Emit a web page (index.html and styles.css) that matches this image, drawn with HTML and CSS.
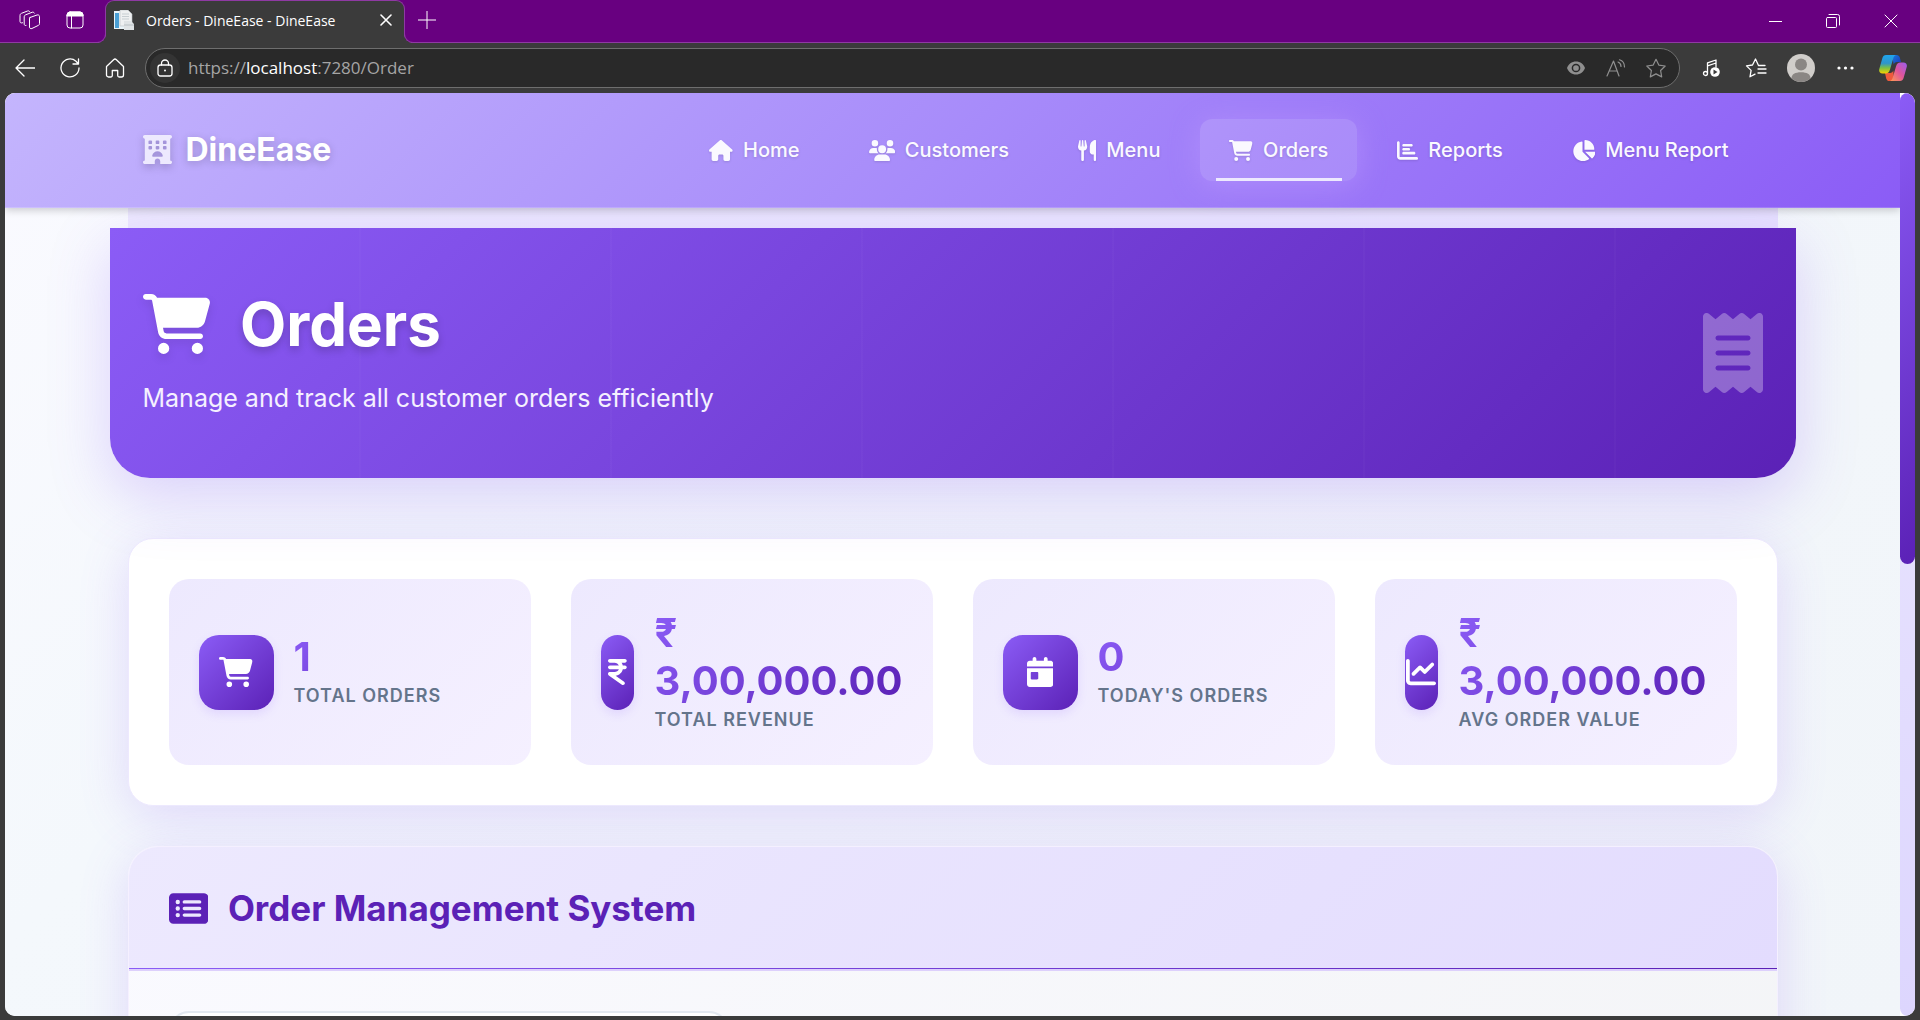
FILE: index.html
```html
<!DOCTYPE html>
<html lang="en">
<head>
<meta charset="utf-8">
<meta name="viewport" content="width=device-width, initial-scale=1">
<title>Orders - DineEase - DineEase</title>
<link rel="stylesheet" href="styles.css">
</head>
<body>
<svg class="sprite" aria-hidden="true">
  <symbol id="cart" viewBox="0 0 576 512"><path d="M0 24C0 10.700 10.700 0 24 0H69.500c22 0 41.500 12.800 50.600 32h411c26.300 0 45.500 25 38.600 50.400l-41 152.300c-8.500 31.400-37 53.300-69.500 53.300H170.700l5.400 28.500c2.200 11.300 12.100 19.500 23.600 19.500H488c13.300 0 24 10.700 24 24s-10.700 24-24 24H199.700c-34.600 0-64.300-24.600-70.700-58.500L77.400 54.500c-.7-3.800-4-6.500-7.900-6.500H24C10.700 48 0 37.300 0 24zM128 464a48 48 0 1 1 96 0 48 48 0 1 1 -96 0zm336-48a48 48 0 1 1 0 96 48 48 0 1 1 0-96z"/></symbol>
</svg>

<header class="titlebar">
  <div class="titlebar-tools">
    <button type="button" class="chrome-btn" aria-label="Workspaces">
      <svg width="22" height="20" viewBox="0 0 22 20" class="line"><path d="M11 7.500l7-2.500c1.200-.4 2.500.2 2.500 1.500v7c0 1-.4 1.600-1.400 2l-6.200 3c-1.300.6-2.400-.2-2.400-1.500V9c0-.8.2-1.300.5-1.500zM7 15.500c-1 .3-1.800-.3-1.800-1.500V7c0-1.200.5-1.800 1.500-2.200L13 2.300c1-.4 2 0 2.400.8M3.500 12.800C2.200 13.300 1 12.800 1 11.500V5.500c0-1.200.5-1.800 1.500-2.200L8.500 1c1-.4 1.800 0 2.200.6"/></svg>
    </button>
    <button type="button" class="chrome-btn" aria-label="Tab actions">
      <svg width="18" height="18" viewBox="0 0 18 18" class="line"><rect x="1" y="1" width="16" height="16" rx="3"/><path d="M1 4a3 3 0 0 1 3-3h10a3 3 0 0 1 3 3v1H1z" fill="#fff"/><path d="M5.500 5v12"/></svg>
    </button>
  </div>
  <div class="tab">
    <svg width="20" height="20" viewBox="0 0 20 20"><path d="M0 1h10v18H0z" fill="#e9f3f8"/><path d="M1 3h4v15H1z" fill="#4a9fd4"/><path d="M6 0h8l4 4v12H6z" fill="#eef0f1" stroke="#b9c0c4" stroke-width=".6"/><path d="M8 4h7M8 6.500h7M8 9h7" stroke="#c7ced2"/><path d="M10 11h7l3 3v6H10z" fill="#dfe3e5"/><path d="M10 15h10" stroke="#b9c0c4"/></svg>
    <span class="tab-title">Orders - DineEase - DineEase</span>
    <button type="button" class="tab-close" aria-label="Close tab"><svg width="12" height="12" viewBox="0 0 12 12" class="line bold"><path d="M1 1l10 10M11 1L1 11"/></svg></button>
  </div>
  <button type="button" class="chrome-btn" aria-label="New tab"><svg width="18" height="18" viewBox="0 0 18 18" class="line"><path d="M9 0v18M0 9h18"/></svg></button>
  <div class="window-controls">
    <button type="button" aria-label="Minimize"><svg width="13" height="13" viewBox="0 0 13 13" class="line"><path d="M0 6.500h13"/></svg></button>
    <button type="button" aria-label="Restore"><svg width="14" height="14" viewBox="0 0 14 14" class="line"><rect x=".5" y="3.500" width="10" height="10" rx="1"/><path d="M3 .5h8.500a2 2 0 0 1 2 2V11"/></svg></button>
    <button type="button" aria-label="Close"><svg width="14" height="14" viewBox="0 0 14 14" class="line"><path d="M1 1l12 12M13 1L1 13"/></svg></button>
  </div>
</header>

<div class="toolbar">
  <button type="button" class="tool" aria-label="Back"><svg width="20" height="18" viewBox="0 0 20 18" class="line mid"><path d="M20 9H1M9 1L1 9l8 8"/></svg></button>
  <button type="button" class="tool" aria-label="Refresh"><svg width="20" height="20" viewBox="0 0 20 20" class="line mid"><path d="M19 10a9 9 0 1 1-3-6.800L18.500 6M18.500 1v5H13"/></svg></button>
  <button type="button" class="tool" aria-label="Home"><svg width="20" height="20" viewBox="0 0 20 20" class="line mid"><path d="M1.500 8.500L8.600 1.700a2 2 0 0 1 2.800 0l7.100 6.800V17a2 2 0 0 1-2 2h-2.300a1.500 1.500 0 0 1-1.500-1.500V12.500h-5.400v5A1.500 1.500 0 0 1 5.800 19H3.500a2 2 0 0 1-2-2z"/></svg></button>
  <div class="address">
    <button type="button" class="lock" aria-label="Site information"><svg width="16" height="18" viewBox="0 0 16 18" class="line mid"><rect x="1" y="6" width="14" height="11" rx="2.500"/><path d="M4.500 6V4.500a3.500 3.500 0 0 1 7 0V6"/><circle cx="8" cy="11.500" r="1" fill="#fff" stroke="none"/></svg></button>
    <div class="url" role="textbox" aria-label="Address" contenteditable="true" spellcheck="false">https://<b>localhost</b>:7280/Order</div>
    <button type="button" class="addr-btn" aria-label="Tracking"><svg width="18" height="14" viewBox="0 0 18 14"><path d="M9 .5C4.800.5 1.200 3.200 0 7c1.200 3.800 4.800 6.500 9 6.500S16.800 10.800 18 7C16.800 3.200 13.200.5 9 .5z" fill="#8f8f8f"/><circle cx="9" cy="7" r="3.600" fill="none" stroke="#292929" stroke-width="1.500"/></svg></button>
    <button type="button" class="addr-btn" aria-label="Read aloud"><svg width="20" height="18" viewBox="0 0 20 18" class="line dim"><path d="M1 17L7.500 2 13 17M3.200 12h8M12 3c2 .8 3 2.400 3 4.500M13.500 .8c3.200 1 5 3.600 5 7.200"/></svg></button>
    <button type="button" class="addr-btn" aria-label="Add to favorites"><svg width="22" height="20" viewBox="0 0 22 20" class="line dim"><path d="M11 1.300l2.800 5.800 6.400.9-4.600 4.500 1.100 6.400L11 15.900l-5.700 3 1.100-6.400L1.800 8l6.400-.9z"/></svg></button>
  </div>
  <button type="button" class="tool" aria-label="Media"><svg width="18" height="18" viewBox="0 0 18 18" class="line mid"><path d="M5.500 14V3.800L14 1v7M5.500 6.800L14 4"/><circle cx="3.500" cy="14.500" r="2"/><circle cx="13" cy="13" r="4.800" fill="#fff" stroke="none"/><path d="M11.500 10.500v5l4-2.500z" fill="#3b3b3b" stroke="none"/></svg></button>
  <button type="button" class="tool" aria-label="Favorites"><svg width="22" height="20" viewBox="0 0 22 20" class="line mid"><path d="M20 7.500h-6.500L10.500 1 7.500 7l-6 .9 4.600 4.500L5 18.800l5-2.700M13 11h8M13 15h8"/></svg></button>
  <button type="button" class="tool" aria-label="Profile"><svg width="28" height="28" viewBox="0 0 28 28"><circle cx="14" cy="14" r="14" fill="#d0cdca"/><circle cx="14" cy="10.500" r="6" fill="#8a8684"/><path d="M4.500 24.200c0-4 3.500-6 9.500-6s9.500 2 9.500 6A14 14 0 0 1 14 28a14 14 0 0 1-9.500-3.800z" fill="#8a8684"/></svg></button>
  <button type="button" class="tool" aria-label="Settings"><svg width="17" height="4" viewBox="0 0 17 4" fill="#fff"><circle cx="2" cy="2" r="1.600"/><circle cx="8.500" cy="2" r="1.600"/><circle cx="15" cy="2" r="1.600"/></svg></button>
  <button type="button" class="tool copilot" aria-label="Copilot"><svg width="28" height="26" viewBox="0 0 28 26">
    <defs>
      <linearGradient id="cl" x1="0" y1="0" x2="0" y2="1"><stop offset="0" stop-color="#1fa5ee"/><stop offset=".45" stop-color="#2f95c9"/><stop offset=".7" stop-color="#7bc142"/><stop offset="1" stop-color="#f5d000"/></linearGradient>
      <linearGradient id="cr" x1="1" y1="0" x2="0" y2="1"><stop offset="0" stop-color="#9a5cf0"/><stop offset=".5" stop-color="#e0559a"/><stop offset="1" stop-color="#ff9c50"/></linearGradient>
      <linearGradient id="cb" x1="0" y1="0" x2="1" y2="1"><stop offset="0" stop-color="#1a7bdc"/><stop offset="1" stop-color="#1b36b8"/></linearGradient>
    </defs>
    <path d="M13 0h4.500c1.800 0 2.800 1 3.300 2.600L22 7h-4c-1.800 0-2.800 1-3.300 2.500z" fill="url(#cb)"/>
    <path d="M15 26h-4.500c-1.800 0-2.800-1-3.300-2.600L6 18h5c1.800 0 2.800-1 3.300-2.500z" fill="#ee5a3c"/>
    <path d="M7 0h10c-1.500.4-2.200 1.600-2.700 3.200L11 14.500C10.200 17.200 9 18.500 6.500 18.500H3.500C.8 18.500-.4 16.500.3 14L3.400 3C4 1 5.200 0 7 0z" fill="url(#cl)"/>
    <path d="M21 26H11c1.500-.4 2.200-1.600 2.700-3.200L17 11.500C17.800 8.800 19 7.500 21.500 7.500h3c2.700 0 3.900 2 3.200 4.500L24.600 23c-.6 2-1.800 3-3.600 3z" fill="url(#cr)"/>
  </svg></button>
</div>

<div class="viewport">
  <div class="page">
    <nav class="navbar">
      <div class="navbar-inner">
        <a class="brand" href="#"><svg class="brand-icon" viewBox="0 0 512 512"><path d="M0 32C0 14.300 14.300 0 32 0H480c17.700 0 32 14.300 32 32s-14.300 32-32 32V448c17.700 0 32 14.300 32 32s-14.300 32-32 32H304V464c0-26.500-21.500-48-48-48s-48 21.500-48 48v48H32c-17.700 0-32-14.300-32-32s14.300-32 32-32V64C14.300 64 0 49.700 0 32zm96 80v32c0 8.800 7.200 16 16 16h32c8.800 0 16-7.200 16-16V112c0-8.800-7.200-16-16-16H112c-8.800 0-16 7.200-16 16zM240 96c-8.800 0-16 7.200-16 16v32c0 8.800 7.200 16 16 16h32c8.800 0 16-7.200 16-16V112c0-8.800-7.200-16-16-16H240zm112 16v32c0 8.800 7.200 16 16 16h32c8.800 0 16-7.200 16-16V112c0-8.800-7.200-16-16-16H368c-8.800 0-16 7.200-16 16zM112 192c-8.800 0-16 7.200-16 16v32c0 8.800 7.200 16 16 16h32c8.800 0 16-7.200 16-16V208c0-8.800-7.200-16-16-16H112zm112 16v32c0 8.800 7.200 16 16 16h32c8.800 0 16-7.200 16-16V208c0-8.800-7.200-16-16-16H240c-8.800 0-16 7.200-16 16zm144-16c-8.800 0-16 7.200-16 16v32c0 8.800 7.200 16 16 16h32c8.800 0 16-7.200 16-16V208c0-8.800-7.200-16-16-16H368zM328 384c13.300 0 24.300-10.900 21-23.800c-10.600-41.500-48.200-72.200-93-72.200s-82.500 30.700-93 72.200c-3.300 12.800 7.800 23.800 21 23.800H328z"/></svg>DineEase</a>
        <ul class="nav-list">
          <li><a class="nav-link" href="#"><svg viewBox="0 0 576 512"><path d="M575.800 255.500c0 18-15 32.100-32 32.100h-32l.7 160.200c0 2.700-.2 5.400-.5 8.100V472c0 22.100-17.900 40-40 40H456c-1.100 0-2.200 0-3.300-.1c-1.400 .1-2.800 .1-4.200 .1H416 392c-22.100 0-40-17.900-40-40V448 384c0-17.700-14.300-32-32-32H256c-17.700 0-32 14.300-32 32v64 24c0 22.100-17.900 40-40 40H160 128.100c-1.500 0-3-.1-4.500-.2c-1.200 .1-2.400 .2-3.600 .2H104c-22.100 0-40-17.900-40-40V360c0-.9 0-1.900 .1-2.800V287.600H32c-18 0-32-14-32-32.100c0-9 3-17 10-24L266.400 8c7-7 15-8 22-8s15 2 21 7L564.800 231.500c8 7 12 15 11 24z"/></svg>Home</a></li>
          <li><a class="nav-link" href="#"><svg viewBox="0 0 640 512"><path d="M144 0a80 80 0 1 1 0 160A80 80 0 1 1 144 0zM512 0a80 80 0 1 1 0 160A80 80 0 1 1 512 0zM0 298.700C0 239.800 47.800 192 106.700 192h42.700c15.900 0 31 3.500 44.600 9.700c-1.300 7.200-1.900 14.700-1.900 22.300c0 38.200 16.800 72.500 43.300 96H21.300C9.600 320 0 310.400 0 298.700zM405.300 320c26.600-23.500 43.300-57.800 43.300-96c0-7.600-.7-15-1.900-22.300c13.600-6.300 28.700-9.700 44.600-9.700h42.700C592.200 192 640 239.800 640 298.700c0 11.800-9.600 21.300-21.300 21.300H405.300zM224 224a96 96 0 1 1 192 0 96 96 0 1 1 -192 0zM128 485.300C128 411.700 187.700 352 261.300 352H378.700C452.300 352 512 411.700 512 485.300c0 14.700-11.900 26.700-26.700 26.700H154.700c-14.700 0-26.700-11.900-26.700-26.700z"/></svg>Customers</a></li>
          <li><a class="nav-link" href="#"><svg viewBox="0 0 448 512"><path d="M416 0C400 0 288 32 288 176V288c0 35.300 28.700 64 64 64h32V480c0 17.700 14.300 32 32 32s32-14.300 32-32V352 240 32c0-17.700-14.300-32-32-32zM64 16C64 7.800 57.900 1 49.700 .1S34.200 4.600 32.400 12.500L2.100 148.800C.7 155.100 0 161.500 0 167.900c0 45.900 35.100 83.600 80 87.700V480c0 17.700 14.300 32 32 32s32-14.300 32-32V255.600c44.900-4.100 80-41.800 80-87.700c0-6.400-.7-12.800-2.100-19.100L191.600 12.500c-1.800-8-9.300-13.300-17.400-12.400S160 7.800 160 16V150.200c0 5.400-4.400 9.800-9.800 9.800c-5.100 0-9.300-3.900-9.800-9L127.900 14.600C127.200 6.300 120.300 0 112 0s-15.200 6.300-15.900 14.600L83.700 151c-.5 5.100-4.700 9-9.800 9c-5.400 0-9.800-4.400-9.800-9.800V16z"/></svg>Menu</a></li>
          <li><a class="nav-link active" href="#" aria-current="page"><svg viewBox="0 0 576 512"><use href="#cart"/></svg>Orders</a></li>
          <li><a class="nav-link" href="#"><svg viewBox="0 0 512 512"><path d="M32 32c17.700 0 32 14.300 32 32V400c0 8.800 7.200 16 16 16H480c17.700 0 32 14.300 32 32s-14.300 32-32 32H80c-44.200 0-80-35.800-80-80V64C0 46.300 14.300 32 32 32zm96 96c0-17.700 14.300-32 32-32l192 0c17.700 0 32 14.300 32 32s-14.300 32-32 32H160c-17.700 0-32-14.300-32-32zm32 64H288c17.700 0 32 14.300 32 32s-14.300 32-32 32H160c-17.700 0-32-14.300-32-32s14.300-32 32-32zm0 96H416c17.700 0 32 14.300 32 32s-14.300 32-32 32H160c-17.700 0-32-14.300-32-32s14.300-32 32-32z"/></svg>Reports</a></li>
          <li><a class="nav-link" href="#"><svg viewBox="0 0 576 512"><path d="M304 240V16.600c0-9 7-16.600 16-16.600C443.700 0 544 100.300 544 224c0 9-7.600 16-16.600 16H304zM32 272C32 150.700 122.100 50.300 239 34.300c9.200-1.300 17 6.100 17 15.400V288L412.500 444.500c6.700 6.700 6.200 17.700-1.500 23.100C371.800 495.600 323.800 512 272 512C139.500 512 32 404.600 32 272zm526.400 16c9.300 0 16.600 7.800 15.400 17c-7.700 55.900-34.600 105.600-73.900 142.300c-6 5.600-15.400 5.200-21.200-.7L320 288H558.400z"/></svg>Menu Report</a></li>
        </ul>
      </div>
    </nav>

    <main class="container">
      <section class="hero">
        <div>
          <h1><svg viewBox="0 0 576 512"><use href="#cart"/></svg>Orders</h1>
          <p>Manage and track all customer orders efficiently</p>
        </div>
        <svg class="hero-icon" viewBox="0 0 384 512"><path d="M14 2.200C22.500-1.700 32.500-.3 39.600 5.800L80 40.400 120.400 5.800c9-7.700 22.300-7.700 31.200 0L192 40.400 232.400 5.800c9-7.700 22.300-7.700 31.200 0L304 40.400 344.400 5.800c7.100-6.100 17.100-7.500 25.600-3.600s14 12.400 14 21.800V488c0 9.400-5.500 17.900-14 21.800s-18.500 2.500-25.600-3.600L304 471.600l-40.400 34.600c-9 7.700-22.300 7.700-31.200 0L192 471.600l-40.400 34.600c-9 7.700-22.300 7.700-31.200 0L80 471.600 39.600 506.200c-7.100 6.100-17.100 7.500-25.600 3.600S0 497.400 0 488V24C0 14.600 5.500 6.100 14 2.200zM96 144c-8.800 0-16 7.200-16 16s7.200 16 16 16H288c8.800 0 16-7.200 16-16s-7.200-16-16-16H96zM80 352c0 8.800 7.200 16 16 16H288c8.800 0 16-7.200 16-16s-7.200-16-16-16H96c-8.800 0-16 7.200-16 16zM96 240c-8.800 0-16 7.200-16 16s7.200 16 16 16H288c8.800 0 16-7.200 16-16s-7.200-16-16-16H96z"/></svg>
      </section>

      <section class="stats" aria-label="Order statistics">
        <article class="stat">
          <div class="stat-icon"><svg viewBox="0 0 576 512"><use href="#cart"/></svg></div>
          <div><div class="stat-value">1</div><div class="stat-label">TOTAL ORDERS</div></div>
        </article>
        <article class="stat">
          <div class="stat-icon"><svg viewBox="0 0 320 512"><path d="M0 64C0 46.300 14.300 32 32 32H96h16H288c17.700 0 32 14.300 32 32s-14.300 32-32 32H231.800c9.600 14.400 16.700 30.600 20.700 48H288c17.700 0 32 14.300 32 32s-14.300 32-32 32H252.400c-13.200 58.300-61.900 103.200-122.200 110.900L274.600 422c14.400 10.300 17.700 30.300 7.400 44.600s-30.300 17.700-44.600 7.400L13.400 314C2.100 306-2.700 291.500 1.500 278.200S18.100 256 32 256h80c32.800 0 61-19.700 73.300-48H32c-17.700 0-32-14.300-32-32s14.300-32 32-32H185.300C173 115.700 144.800 96 112 96H96 32C14.300 96 0 81.700 0 64z"/></svg></div>
          <div><div class="stat-value">₹ 3,00,000.00</div><div class="stat-label">TOTAL REVENUE</div></div>
        </article>
        <article class="stat">
          <div class="stat-icon"><svg viewBox="0 0 448 512"><path d="M128 0c17.700 0 32 14.300 32 32V64H288V32c0-17.700 14.300-32 32-32s32 14.300 32 32V64h48c26.500 0 48 21.500 48 48v48H0V112C0 85.500 21.500 64 48 64H96V32c0-17.700 14.300-32 32-32zM0 192H448V464c0 26.500-21.500 48-48 48H48c-26.500 0-48-21.500-48-48V192zm80 64c-8.800 0-16 7.200-16 16v96c0 8.800 7.200 16 16 16h96c8.800 0 16-7.200 16-16V272c0-8.800-7.200-16-16-16H80z"/></svg></div>
          <div><div class="stat-value">0</div><div class="stat-label">TODAY'S ORDERS</div></div>
        </article>
        <article class="stat">
          <div class="stat-icon"><svg viewBox="0 0 512 512"><path d="M64 64c0-17.700-14.300-32-32-32S0 46.300 0 64V400c0 44.200 35.800 80 80 80H480c17.700 0 32-14.300 32-32s-14.300-32-32-32H80c-8.800 0-16-7.200-16-16V64zm406.600 86.600c12.500-12.500 12.500-32.800 0-45.300s-32.800-12.500-45.300 0L320 210.700l-57.400-57.400c-12.500-12.500-32.800-12.500-45.300 0l-112 112c-12.500 12.500-12.500 32.800 0 45.300s32.800 12.500 45.300 0L240 221.300l57.400 57.400c12.500 12.500 32.800 12.500 45.300 0l128-128z"/></svg></div>
          <div><div class="stat-value">₹ 3,00,000.00</div><div class="stat-label">AVG ORDER VALUE</div></div>
        </article>
      </section>

      <section class="panel">
        <header class="panel-header">
          <h2><svg viewBox="0 0 576 512"><path d="M0 96C0 60.700 28.700 32 64 32H512c35.300 0 64 28.700 64 64V416c0 35.300-28.700 64-64 64H64c-35.300 0-64-28.700-64-64V96zM128 288a32 32 0 1 0 0-64 32 32 0 1 0 0 64zm32-128a32 32 0 1 0 -64 0 32 32 0 1 0 64 0zM128 384a32 32 0 1 0 0-64 32 32 0 1 0 0 64zm96-248c-13.300 0-24 10.700-24 24s10.700 24 24 24H448c13.300 0 24-10.700 24-24s-10.700-24-24-24H224zm0 96c-13.300 0-24 10.700-24 24s10.700 24 24 24H448c13.300 0 24-10.700 24-24s-10.700-24-24-24H224zm0 96c-13.300 0-24 10.700-24 24s10.700 24 24 24H448c13.300 0 24-10.700 24-24s-10.700-24-24-24H224z"/></svg>Order Management System</h2>
        </header>
        <div class="panel-body">
          <input class="search" type="search" aria-label="Search orders">
        </div>
      </section>
    </main>
  </div>
  <div class="scrollbar"><div class="thumb"></div></div>
</div>
</body>
</html>
```
FILE: styles.css
```css
*, *::before, *::after { box-sizing: border-box; }

body {
  margin: 0;
  height: 100vh;
  display: flex;
  flex-direction: column;
  overflow: hidden;
  background: #3b3b3b;
  font-family: Inter, "Liberation Sans", sans-serif;
}

h1, h2, p, ul { margin: 0; padding: 0; }
ul { list-style: none; }
a { color: inherit; text-decoration: none; }
button {
  display: flex;
  align-items: center;
  justify-content: center;
  padding: 0;
  border: 0;
  background: none;
}
.sprite { display: none; }

/* Browser window */
.line { fill: none; stroke: #fff; stroke-width: 1; stroke-linecap: round; stroke-linejoin: round; }
.line.mid { stroke-width: 1.3; }
.line.bold { stroke-width: 1.6; }
.line.dim { stroke: #8f8f8f; stroke-width: 1.2; }

.titlebar {
  flex: none;
  display: flex;
  height: 43px;
  padding-left: 8px;
  background: #680080;
  border-bottom: 1px solid #8f3aa3;
  font-family: "Open Sans", "Noto Sans", sans-serif;
}
.titlebar-tools { display: flex; gap: 1px; margin-right: 8px; }
.chrome-btn { width: 44px; height: 40px; }
.tab {
  position: relative;
  display: flex;
  align-items: center;
  width: 300px;
  height: 43px;
  padding: 0 6px 4px 8px;
  background: #3b3b3b;
  border: 1px solid #8f3aa3;
  border-bottom: 0;
  border-radius: 9px 9px 0 0;
}
.tab::before, .tab::after {
  content: "";
  position: absolute;
  bottom: 0;
  width: 10px;
  height: 10px;
  border: 1px solid #8f3aa3;
  border-top: 0;
}
.tab::before { right: 100%; border-left: 0; border-radius: 0 0 9px 0; box-shadow: 3px 3px 0 #3b3b3b; clip-path: inset(0 -1px 0 0); }
.tab::after { left: 100%; border-right: 0; border-radius: 0 0 0 9px; box-shadow: -3px 3px 0 #3b3b3b; clip-path: inset(0 0 0 -1px); }
.tab-title { flex: 1; margin-left: 12px; color: #fff; font-size: 14px; white-space: nowrap; }
.tab-close { width: 24px; height: 24px; }
.window-controls { display: flex; margin-left: auto; }
.window-controls button { width: 58px; height: 42px; }

.toolbar {
  flex: none;
  display: flex;
  align-items: center;
  height: 50px;
  padding: 0 2px;
  background: #3b3b3b;
}
.tool { width: 45px; height: 40px; }
.copilot { width: 50px; }
.address {
  flex: 1;
  display: flex;
  align-items: center;
  height: 40px;
  margin: 0 8px;
  padding: 0 3px 0 4px;
  border: 1px solid #6e6e6e;
  border-radius: 20px;
  background: #292929;
}
.lock { width: 30px; height: 30px; border-radius: 50%; background: #343434; }
.url {
  flex: 1;
  margin-left: 8px;
  color: #a5a5a5;
  font: 17px/24px "Open Sans", "Noto Sans", sans-serif;
  outline: 0;
}
.url b { color: #fff; font-weight: 400; }
.addr-btn { width: 40px; height: 38px; }

/* Page */
.viewport {
  flex: 1;
  min-height: 0;
  display: flex;
  margin: 0 5px 4px;
  border-radius: 10px;
  overflow: hidden;
  background: #fff;
}
.page {
  flex: 1;
  min-width: 0;
  overflow: hidden;
  background: linear-gradient(135deg, #fafaff 0%, #f4f8fc 30%, #f1f5f9 100%);
}
.scrollbar { flex: none; width: 15px; border-radius: 8px; background: linear-gradient(#ede9fe, #ddd6fe); }
.thumb { height: 51%; border-radius: 8px; background: linear-gradient(135deg, #8b5cf6, #5b21b6); }

.navbar {
  position: relative;
  z-index: 1;
  background: linear-gradient(135deg, #c4b5fd 0%, #a78bfa 50%, #8b5cf6 100%);
  border-bottom: 1px solid rgba(255, 255, 255, .15);
  box-shadow: 0 2px 8px rgba(0, 0, 0, .2);
}
.navbar-inner {
  display: flex;
  align-items: center;
  justify-content: space-between;
  max-width: 1650px;
  min-height: 114px;
  margin: 0 auto;
  padding: 0 20px 0 15px;
}
.brand {
  display: flex;
  align-items: center;
  gap: 14px;
  padding-bottom: 2px;
  color: #fff;
  font-size: 32px;
  font-weight: 700;
  text-shadow: 0 2px 8px rgba(0, 0, 0, .2);
}
.brand-icon { width: 29px; height: 29px; fill: #ede9fe; filter: drop-shadow(0 3px 4px rgba(0, 0, 0, .2)); }
.nav-list { display: flex; gap: 11px; }
.nav-link {
  position: relative;
  display: flex;
  align-items: center;
  gap: 10px;
  height: 62px;
  padding: 0 29px;
  border-radius: 12px;
  color: #faf9ff;
  font-size: 20px;
  font-weight: 500;
  text-shadow: 0 1px 3px rgba(0, 0, 0, .15);
}
.nav-link svg { height: 21px; fill: currentColor; filter: drop-shadow(0 1px 1px rgba(0, 0, 0, .12)); }
.nav-link.active { background: rgba(255, 255, 255, .15); box-shadow: 0 4px 30px rgba(196, 160, 255, .45); }
.nav-link.active::after {
  content: "";
  position: absolute;
  left: 10%;
  right: 10%;
  bottom: 0;
  height: 3px;
  background: #ede9fe;
}

.container { max-width: 1650px; margin: 0 auto; }
.hero {
  position: relative;
  display: flex;
  align-items: center;
  justify-content: space-between;
  min-height: 250px;
  margin: 20px -18px 60px;
  padding: 0 33px;
  border-radius: 0 0 40px 40px;
  background:
    repeating-linear-gradient(90deg, transparent 0 249px, rgba(255, 255, 255, .02) 249px 251px),
    linear-gradient(135deg, #8b5cf6 0%, #5b21b6 100%);
  box-shadow: 0 20px 60px rgba(139, 92, 246, .25);
  color: #fff;
}
.container::before {
  content: "";
  display: block;
  height: 20px;
  margin-bottom: -20px;
  background: linear-gradient(135deg, #ede9fe, #e6e0fe);
}
.hero h1 {
  display: flex;
  align-items: center;
  gap: 30px;
  font-size: 60px;
  line-height: 72px;
  font-weight: 700;
  text-shadow: 0 4px 8px rgba(0, 0, 0, .2);
}
.hero h1 svg { height: 60px; fill: #fff; filter: drop-shadow(0 4px 4px rgba(0, 0, 0, .1)); }
.hero p { margin-top: 18px; font-size: 25px; line-height: 40px; color: #f5f0ff; }
.hero-icon { height: 80px; fill: #fff; opacity: .3; }

.stats {
  display: grid;
  grid-template-columns: repeat(4, 1fr);
  gap: 40px;
  margin-bottom: 40px;
  padding: 40px;
  border: 1px solid #ede9fe;
  border-radius: 25px;
  background: #fff;
  box-shadow: 0 10px 50px rgba(139, 92, 246, .2);
}
.stat {
  display: flex;
  align-items: center;
  gap: 20px;
  min-width: 0;
  min-height: 186px;
  padding: 30px;
  border-radius: 20px;
  background: linear-gradient(135deg, #ede9fe, #f5f0ff);
}
.stat-icon {
  display: flex;
  align-items: center;
  justify-content: center;
  width: 75px;
  height: 75px;
  border-radius: 20px;
  background: linear-gradient(135deg, #8b5cf6, #5b21b6);
  box-shadow: 0 4px 10px rgba(139, 92, 246, .15);
}
.stat-icon svg { flex: none; height: 30px; fill: #fff; }
.stat-value {
  color: transparent;
  background: linear-gradient(135deg, #8b5cf6, #5b21b6);
  -webkit-background-clip: text;
  background-clip: text;
  font-size: 40px;
  line-height: 48px;
  font-weight: 700;
}
.stat-label { color: #64748b; font-size: 18px; line-height: 30px; font-weight: 600; letter-spacing: 1px; }

.panel {
  min-height: 500px;
  border: 1px solid #f5f0ff;
  border-radius: 30px;
  overflow: hidden;
  background: linear-gradient(135deg, #fafaff, #f3f4f6);
  box-shadow: 0 10px 50px rgba(139, 92, 246, .2);
}
.panel-header {
  position: relative;
  padding: 40px;
  border-bottom: 2px solid #ddd0fc;
  background: linear-gradient(135deg, #ede9fe, #e3dcfe);
}
.panel-header::after {
  content: "";
  position: absolute;
  left: 0;
  right: 0;
  bottom: 0;
  height: 1px;
  background: linear-gradient(90deg, #8b5cf6, #5b21b6);
}
.panel-header h2 {
  display: flex;
  align-items: center;
  gap: 20px;
  color: #5b21b6;
  font-size: 35px;
  line-height: 42px;
  font-weight: 700;
}
.panel-header h2 svg { height: 35px; fill: currentColor; }
.panel-body { padding: 40px; }
.search {
  width: 560px;
  max-width: 100%;
  height: 60px;
  padding: 0 24px;
  border: 2px solid #e2e8f0;
  border-radius: 20px;
  background: #fff;
  font: 500 18px Inter, sans-serif;
}
```
